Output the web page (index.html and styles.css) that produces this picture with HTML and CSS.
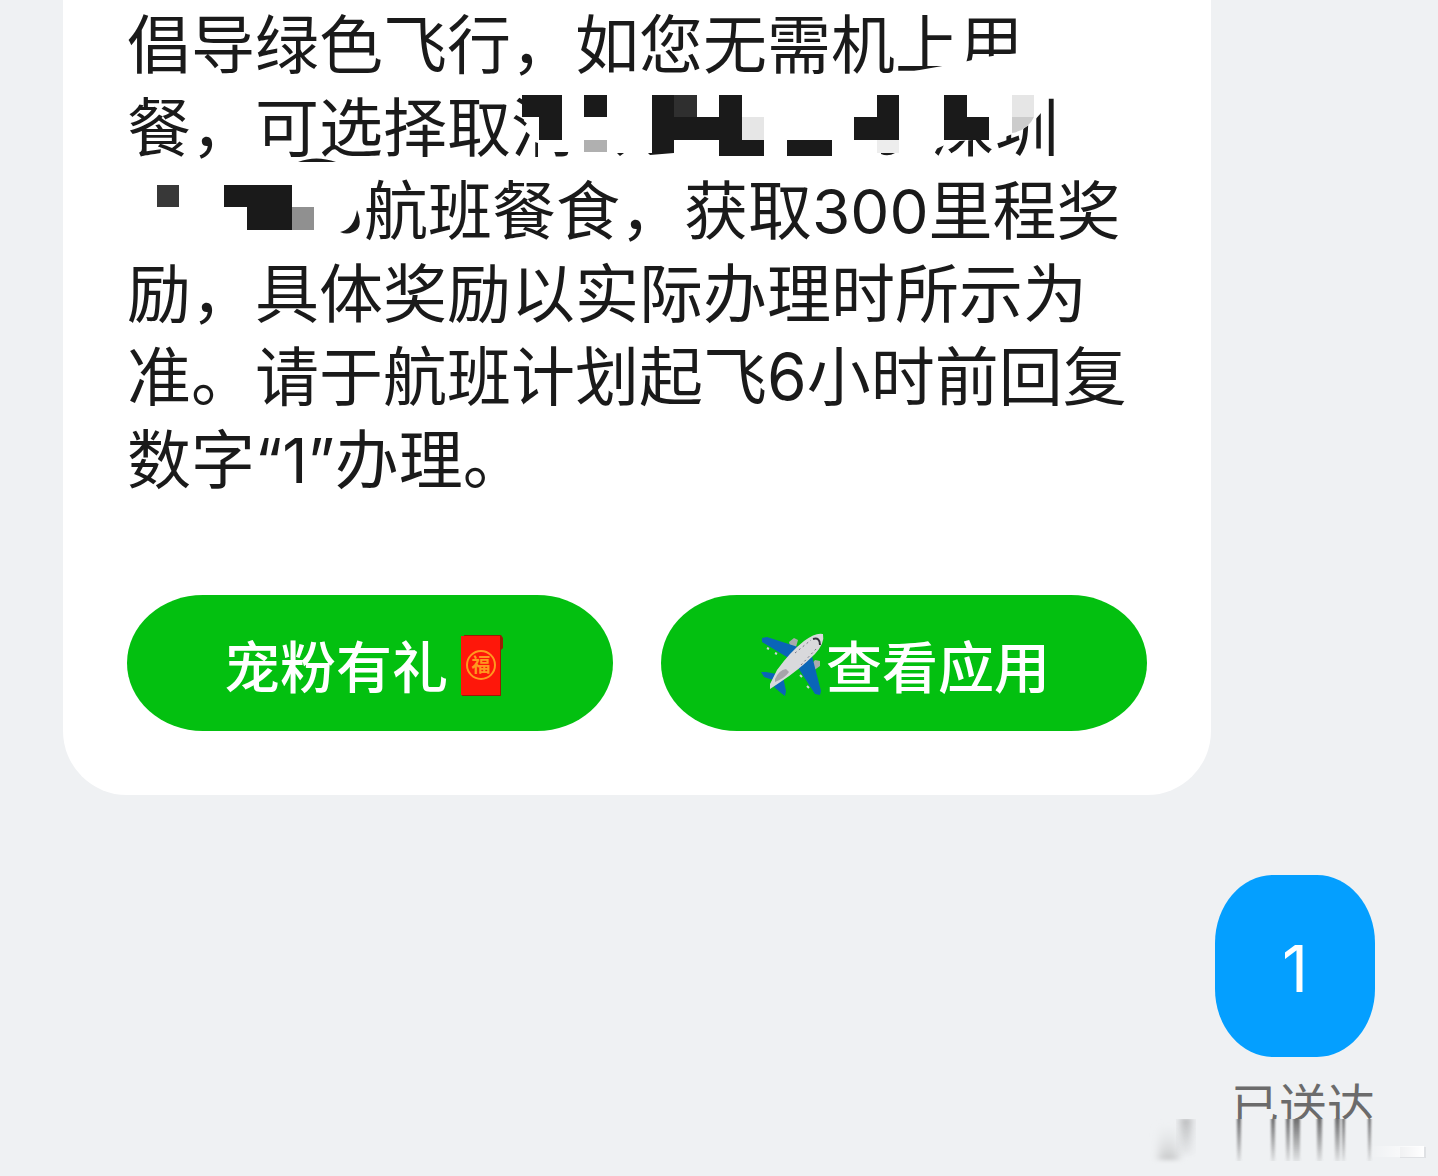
FILE: index.html
```
<!DOCTYPE html>
<html lang="zh-CN">
<head>
    <meta charset="UTF-8">
    <meta name="viewport" content="width=device-width, initial-scale=1.0">
    <title>短信</title>
    <link rel="stylesheet" href="styles.css">
</head>
<body>
    <main class="chat">
        <div class="card">
            <p class="message">
                倡导绿色飞行，如您无需机上用<br>
                餐，可选择取消<span class="hidden-flight"></span>深圳<br>
                <span class="hidden-route"></span>航班餐食，获取<span class="digits">300</span>里程奖<br>
                励，具体奖励以实际办理时所示为<br>
                准。请于航班计划起飞6小时前回复<br>
                数字<span class="digits">“1”</span>办理。
                <svg class="mosaic" viewBox="127 3 1020 498" aria-hidden="true">
                    <!-- erased parts -->
                    <g fill="#fff">
                        <path d="M914 71L948 65L968 61Q990 55 1022 53V84H914Z"/>
                        <path d="M526 90L522 103L525 110L524 121L531 127L532 141L538 143V160H553V152H929L945 145L960 141L985 139L1005 137L1020 131L1033 122L1041 113V90Z"/>
                        <path d="M569 140H652V165H569Z"/>
                    </g>
                    <!-- pixel blocks, line 2 -->
                    <g fill="#1a1a1a" shape-rendering="crispEdges">
                        <path d="M522 95H562V140H539V117H522Z"/>
                        <path d="M584 95H607V117H584Z"/>
                        <path d="M652 95H674V117H719V95H742V140H764V156H719V140H674V153H652Z"/>
                        <path d="M787 140H832V156H787Z"/>
                        <path d="M877 95H899V140H854V117H877Z"/>
                        <path d="M944 95H967V117H989V140H944Z"/>
                    </g>
                    <g shape-rendering="crispEdges">
                        <path fill="#b0b0b0" d="M584 140H607V152H584Z"/>
                        <path fill="#2f2f2f" d="M674 95H697V117H674Z"/>
                        <path fill="#e6e6e6" d="M742 117H764V140H742ZM1012 95H1034V117H1012Z"/>
                        <path fill="#ededed" d="M877 140H899V153H877Z"/>
                    </g>
                    <path fill="#ccc" d="M1012 117H1034Q1028 130 1012 133Z"/>
                    <!-- pixel blocks, line 3 -->
                    <g shape-rendering="crispEdges">
                        <path fill="#383838" d="M157 185H179V207H157Z"/>
                        <path fill="#1a1a1a" d="M224 185H292V230H247V207H224Z"/>
                        <path fill="#909090" d="M292 207H314V230H292Z"/>
                    </g>
                    <!-- leftover strokes -->
                    <g fill="#1a1a1a">
                        <path d="M298 162Q316 155 336 162Z"/>
                        <path d="M357 210Q364 228 353 232Q347 235 340 232Q354 229 357 210Z"/>
                        <path d="M617 153H624L620 156ZM648 153H674L650 155ZM881 153H895Q888 157 881 154Z"/>
                    </g>
                </svg>
            </p>
            <div class="actions">
                <button type="button" class="action">宠粉有礼<svg class="emoji" viewBox="448 627 68 72" aria-hidden="true">
                    <path fill="#9b1c05" d="M464 635H501L503 638V648L501 650V696H462Z"/>
                    <path fill="#fe170a" d="M461 636H500V695H461Z"/>
                    <circle cx="481" cy="665" r="14" fill="none" stroke="#ff981f" stroke-width="2"/>
                    <text class="fu" x="481" y="672" text-anchor="middle">福</text>
                </svg></button>
                <button type="button" class="action"><svg class="emoji" viewBox="758 627 68 72" aria-hidden="true">
                    <path fill="#a9abad" d="M789 642L794 638L798 640L796 647L791 649ZM810 666L815 660L820 661L820 666L813 671Z"/>
                    <path fill="#0a65b7" d="M762 638L767 637L801 648L790 659L767 645L762 642Z"/>
                    <path fill="#0a65b7" d="M797 666L812 656L821 691L820 695L815 694Z"/>
                    <path fill="#0a65b7" d="M761 672L766 672L782 675L776 681L764 677ZM774 687L783 677L786 691L785 696L781 693Z"/>
                    <path fill="#d9d9dc" d="M823 634Q825 643 815 654Q799 670 779 683L770 689L770 684L777 670Q790 652 804 641Q816 632 823 634Z"/>
                    <path fill="#a7a4aa" d="M775 679Q779 670 786 669L789 672Q785 678 775 682Z"/>
                    <path fill="none" stroke="#34323d" stroke-width="2" d="M813 639Q820 637 820 645"/>
                    <path fill="none" stroke="#747782" stroke-width="1" stroke-dasharray="2 3" d="M795 653L811 640M801 665L817 648"/>
                    <path fill="none" stroke="#ccd2da" stroke-width="2" d="M767 648L769 649M775 653L777 654M800 675L802 677M807 686L809 688"/>
                </svg>查看应用</button>
            </div>
        </div>

        <div class="reply">
            <div class="bubble">1</div>
            <div class="status">
                已送达
                <svg class="smear" viewBox="1140 1119 298 56" aria-hidden="true">
                    <defs>
                        <linearGradient id="fade" x1="0" y1="0" x2="0" y2="1">
                            <stop offset="0" stop-color="#6f6f70"/>
                            <stop offset="1" stop-color="#6f6f70" stop-opacity="0.1"/>
                        </linearGradient>
                        <linearGradient id="fadeUp" x1="0" y1="1" x2="0" y2="0">
                            <stop offset="0" stop-color="#c8c9ca"/>
                            <stop offset="1" stop-color="#e5e7e8" stop-opacity="0"/>
                        </linearGradient>
                        <linearGradient id="bar">
                            <stop offset="0" stop-color="#fff" stop-opacity="0"/>
                            <stop offset="1" stop-color="#fff"/>
                        </linearGradient>
                        <filter id="soft" x="-50%" y="-10%" width="200%" height="120%">
                            <feGaussianBlur stdDeviation="1 0"/>
                        </filter>
                        <filter id="softer" x="-50%" y="-20%" width="200%" height="140%">
                            <feGaussianBlur stdDeviation="4 2"/>
                        </filter>
                    </defs>
                    <path fill="#eff1f3" d="M1140 1119H1438V1175H1140Z"/>
                    <path fill="url(#fadeUp)" filter="url(#softer)" d="M1159 1122H1178V1160H1159Z"/>
                    <path fill="url(#fade)" opacity="0.5" filter="url(#softer)" d="M1181 1118H1191V1155H1181Z"/>
                    <g fill="url(#fade)" filter="url(#soft)">
                        <rect x="1237" y="1119" width="4" height="42"/>
                        <rect x="1271" y="1119" width="4" height="42"/>
                        <rect x="1286" y="1119" width="4" height="42"/>
                        <rect x="1293" y="1119" width="7" height="42"/>
                        <rect x="1317" y="1119" width="5" height="42"/>
                        <rect x="1335" y="1119" width="5" height="42"/>
                        <rect x="1342" y="1119" width="3" height="42"/>
                        <rect x="1368" y="1119" width="3" height="42"/>
                    </g>
                    <rect x="1400" y="1147" width="26" height="11" fill="#c9cbcd" opacity="0.4"/>
                    <rect x="1370" y="1146" width="54" height="11" fill="url(#bar)"/>
                </svg>
            </div>
        </div>
    </main>
</body>
</html>
```

FILE: styles.css
```
body {
    margin: 0;
    background-color: #eff1f3;
    font-family: Inter, "Noto Sans CJK SC", sans-serif;
}

.chat {
    display: flex;
    flex-direction: column;
    gap: 80px;
    padding: 0 63px 40px;
    overflow: hidden;
}

.card {
    margin-right: 164px;
    padding: 3px 64px 64px;
    background-color: #fff;
    border-radius: 0 0 64px 64px;
}

.message {
    position: relative;
    margin: 0 0 94px;
    color: #1a1a1a;
    font-size: 64px;
    line-height: 83px;
    white-space: nowrap;
}

.digits {
    font-size: 62px;
    line-height: 1;
}

.hidden-flight,
.hidden-route {
    display: inline-block;
    width: 356px;
}

.hidden-route {
    width: 237px;
}

/* lies over the text it hides */
.mosaic {
    position: absolute;
    top: 0;
    left: 0;
    width: 1020px;
    height: 498px;
    overflow: visible;
}

.actions {
    display: flex;
    gap: 48px;
}

.action {
    flex: 1;
    display: flex;
    align-items: center;
    justify-content: center;
    height: 136px;
    padding: 0;
    border: none;
    border-radius: 76px / 68px;
    background-color: #03c010;
    color: #fff;
    font-family: inherit;
    font-size: 56px;
    font-weight: 500;
    cursor: pointer;
}

.emoji {
    width: 68px;
    height: 72px;
}

.fu {
    fill: #ff981f;
    font-size: 19px;
    font-weight: 700;
}

.reply {
    display: flex;
    flex-direction: column;
    align-items: flex-end;
    gap: 22px;
}

.bubble {
    min-width: 160px;
    padding: 51px 60px 45px;
    border-radius: 58px / 68px;
    background-color: #049fff;
    box-sizing: border-box;
    color: #fff;
    font-size: 64px;
    line-height: 86px;
    text-align: center;
}

.status {
    position: relative;
    color: #6b6b6b;
    font-size: 48px;
    line-height: 56px;
}

.smear {
    position: absolute;
    top: 40px;
    right: -63px;
    width: 298px;
    height: 56px;
}
```
